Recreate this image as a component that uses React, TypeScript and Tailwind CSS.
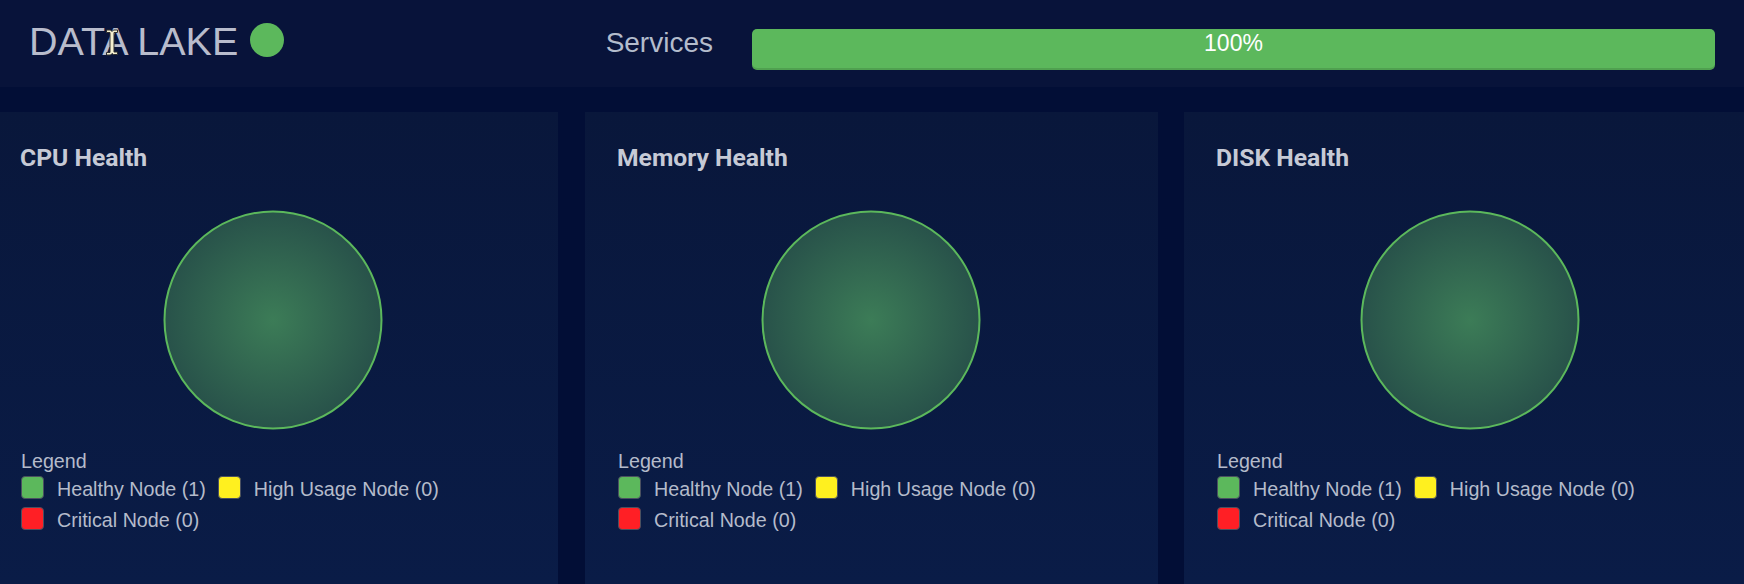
import React from "react";

const legend = [
  { label: "Healthy Node (1)", color: "bg-[#5cb85c]" },
  { label: "High Usage Node (0)", color: "bg-[#fff01f]" },
  { label: "Critical Node (0)", color: "bg-[#ff1f25]" },
];

const HealthPanel = ({ title, id, width }: { title: string; id: string; width: string }) => {
  return (
    <div
      className={`${width} shrink-0 h-[472px] bg-gradient-to-b from-[#09173b] to-[#0a1c47] pl-[32px] pt-[28px]`}
    >
      <h2 className="font-['Roboto',sans-serif] font-bold text-[24.7px] leading-[36px] text-[#c6cad6]">
        {title}
      </h2>
      <div className="flex justify-center pr-[32px] mt-[34px]">
        <svg width="220" height="220" viewBox="0 0 220 220" className="-ml-[1px]">
          <defs>
            <radialGradient id={id} cx="50%" cy="50%" r="50%">
              <stop offset="0%" stopColor="#3c7c57" />
              <stop offset="100%" stopColor="#28524a" />
            </radialGradient>
          </defs>
          <circle cx="110" cy="110" r="108.5" fill={`url(#${id})`} stroke="#5cb85c" strokeWidth="2" />
        </svg>
      </div>
      <div className="mt-[19px] ml-[1px] font-['Liberation_Sans',Arial,sans-serif] text-[19.7px] text-[#b5bbcb]">
        <div className="leading-[24px]">Legend</div>
        <div className="flex flex-wrap gap-x-[12px] mt-[3px] pr-[40px]">
          {legend.map((l) => (
            <div key={l.label} className="flex items-start h-[31px]">
              <span
                className={`w-[23px] h-[23px] rounded-[4px] border border-[#4a5060] ${l.color}`}
              />
              <span className="ml-[13px] mt-[1px] leading-[24px]">{l.label}</span>
            </div>
          ))}
        </div>
      </div>
    </div>
  );
};

export default function App() {
  return (
    <div className="w-[1744px] h-[584px] overflow-hidden bg-[#020e36]">
      <header className="h-[87px] bg-[#08133a] flex items-start relative">
        <div className="flex items-start pl-[29px] pt-[18px]">
          <span className="font-['Liberation_Sans',Arial,sans-serif] text-[39.5px] leading-[46px] text-[#b8bccc]">
            DATA LAKE
          </span>
          <span className="w-[34px] h-[34px] rounded-full bg-[#5cb85c] ml-[12px] mt-[5px]" />
        </div>
        {/* mouse cursor caught in the screenshot */}
        <svg width="14" height="27" viewBox="0 0 14 27" className="absolute left-[105px] top-[29px]">
          <path
            d="M1.5 1h4l1.5 1.5 1.5-1.5h4v2.5H9v19.5h3.5v2.5h-4L7 24.5 5.5 26h-4v-2.5H5V3.5H1.5z"
            fill="#f4efcf"
            stroke="#2e2e2e"
            strokeWidth="1"
          />
        </svg>
        <div className="ml-auto flex items-start pt-[27px] pr-[29px]">
          <span className="font-['Liberation_Sans',Arial,sans-serif] text-[28px] leading-[32px] text-[#b3bccc] mr-[39px]">
            Services
          </span>
          <div className="w-[963px] h-[41px] mt-[2px] rounded-[5px] bg-[#5cb85c] shadow-[inset_0_-2px_0_rgba(0,0,0,0.12)] text-center font-['Liberation_Sans',Arial,sans-serif] text-[23px] leading-[27px] pt-[1px] text-white">
            100%
          </div>
        </div>
      </header>
      <div className="flex mt-[25px] -ml-[12px]">
        <HealthPanel title="CPU Health" id="g1" width="w-[570px]" />
        <div className="w-[27px] shrink-0" />
        <HealthPanel title="Memory Health" id="g2" width="w-[573px]" />
        <div className="w-[26px] shrink-0" />
        <HealthPanel title="DISK Health" id="g3" width="w-[573px]" />
      </div>
    </div>
  );
}
